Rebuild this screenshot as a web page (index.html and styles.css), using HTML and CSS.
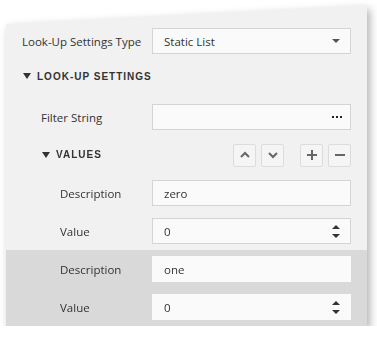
FILE: index.html
```html
<!DOCTYPE html>
<html>
<head>
	<meta charset="UTF-8">
	<title>Look-Up Settings</title>
	<link rel="stylesheet" href="styles.css">
</head>
<body>

	<div class="frame">
		<div class="panel">

			<div class="row">
				<span class="label">Look-Up Settings Type</span>
				<div class="field">
					<span class="text">Static List</span>
					<span class="drop"></span>
				</div>
			</div>

			<div class="row group">
				<span class="caret"></span><span class="title">Look-Up Settings</span>
			</div>

			<div class="row lvl1">
				<span class="label">Filter String</span>
				<div class="field">
					<span class="text"></span>
					<svg class="dots" width="10" height="2" viewBox="0 0 10 2"><rect x="0" y="0" width="2" height="2" fill="#222"/><rect x="4" y="0" width="2" height="2" fill="#222"/><rect x="8" y="0" width="2" height="2" fill="#222"/></svg>
				</div>
			</div>

			<div class="row group lvl1">
				<span class="caret"></span><span class="title">Values</span>
				<div class="tools">
					<span class="btn"><svg width="12" height="12" viewBox="0 0 12 12"><path d="M2 8 L6 4 L10 8" fill="none" stroke="#666" stroke-width="2"/></svg></span>
					<span class="btn"><svg width="12" height="12" viewBox="0 0 12 12"><path d="M2 4 L6 8 L10 4" fill="none" stroke="#666" stroke-width="2"/></svg></span>
					<span class="btn gap"><svg width="12" height="12" viewBox="0 0 12 12"><path d="M6 1 V11 M1 6 H11" fill="none" stroke="#666" stroke-width="2"/></svg></span>
					<span class="btn"><svg width="12" height="12" viewBox="0 0 12 12"><path d="M1 6 H11" fill="none" stroke="#666" stroke-width="2"/></svg></span>
				</div>
			</div>

			<div class="item">
				<div class="row lvl2">
					<span class="label">Description</span>
					<div class="field"><span class="text">zero</span></div>
				</div>
				<div class="row lvl2">
					<span class="label">Value</span>
					<div class="field">
						<span class="text">0</span>
						<span class="spin"><span class="up"></span><span class="down"></span></span>
					</div>
				</div>
			</div>

			<div class="item selected">
				<div class="row lvl2">
					<span class="label">Description</span>
					<div class="field"><span class="text">one</span></div>
				</div>
				<div class="row lvl2">
					<span class="label">Value</span>
					<div class="field">
						<span class="text">0</span>
						<span class="spin"><span class="up"></span><span class="down"></span></span>
					</div>
				</div>
			</div>

		</div>
	</div>

</body>
</html>
```

FILE: styles.css
```css
body {
	margin: 0;
	padding: 0;
	background-color: #fff;
	font-family: 'Open Sans', 'Noto Sans', sans-serif;
	font-size: 11.5px;
	color: #333;
}

/* outer frame carries the shadow, panel is clipped */
.frame {
	width: 361px;
	padding: 5px 0 0 6px;
	filter: drop-shadow(3px 4px 4px rgba(0,0,0,0.3));
}
.panel {
	background-color: #f1f1f1;
	padding-top: 17px;
	clip-path: polygon(0 19px, 100% 0, 100% 100%, 0 100%);
}

/* rows */
.row {
	display: flex;
	align-items: center;
	height: 38px;
	padding: 0 16px;
}
.row .label {
	flex: 1;
}
.lvl1 {
	padding-left: 35px;
}
.lvl2 {
	padding-left: 54px;
}

/* editors */
.field {
	display: flex;
	align-items: center;
	width: 199px;
	height: 26px;
	box-sizing: border-box;
	border: 1px solid #d4d4d4;
	background-color: #fafafa;
	padding: 0 8px 0 11px;
}
.field .text {
	flex: 1;
}
.drop {
	width: 0;
	height: 0;
	border-left: 4px solid transparent;
	border-right: 4px solid transparent;
	border-top: 4px solid #555;
	margin-right: 2px;
}
.dots {
	margin-right: 0;
}
.spin {
	display: flex;
	flex-direction: column;
	gap: 5px;
	margin-right: 2px;
}
.spin .up, .spin .down {
	width: 0;
	height: 0;
	border-left: 4px solid transparent;
	border-right: 4px solid transparent;
}
.spin .up {
	border-bottom: 4px solid #333;
}
.spin .down {
	border-top: 4px solid #333;
}

/* group headers */
.group .caret {
	width: 0;
	height: 0;
	border-left: 4px solid transparent;
	border-right: 4px solid transparent;
	border-top: 6px solid #333;
	margin: 0 6px 0 1px;
}
.group .title {
	flex: 1;
	font-family: 'Liberation Sans', sans-serif;
	font-size: 10px;
	font-weight: bold;
	letter-spacing: 1px;
	text-transform: uppercase;
	color: #333;
}
.lvl1 .title {
	margin-top: -2px;
}
.row.group:not(.lvl1) {
	margin-top: -3px;
	margin-bottom: 3px;
}
.tools {
	display: flex;
	gap: 5px;
}
.btn {
	display: flex;
	align-items: center;
	justify-content: center;
	width: 23px;
	height: 23px;
	box-sizing: border-box;
	border: 1px solid #dcdcdc;
	border-radius: 2px;
	background-color: #f5f5f5;
}
.btn.gap {
	margin-left: 11px;
}

/* collection items */
.item.selected {
	background-color: #d9d9d9;
}
.item.selected .field {
	border-color: #fafafa;
}
```
